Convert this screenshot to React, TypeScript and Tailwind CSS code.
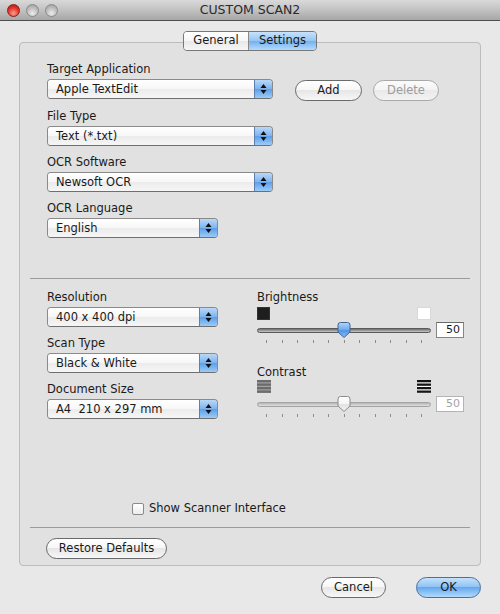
import React from "react";

const Arrows = () => (
  <svg width="7" height="12" viewBox="0 0 7 12">
    <path d="M3.5 1 L6.5 5 L0.5 5 Z" fill="#111" />
    <path d="M3.5 11 L6.5 7 L0.5 7 Z" fill="#111" />
  </svg>
);

const Select = ({ value, w }: { value: string; w: string }) => (
  <div className={`${w} flex h-[20px] shrink-0 overflow-hidden rounded-[4px] border border-[#8a8a8a] border-b-[#6f6f6f]`}>
    <div className="flex-1 pl-[8px] leading-[18px] bg-[linear-gradient(#ffffff,#f7f7f7_50%,#ebebeb_50%,#f6f6f6)] whitespace-pre">
      {value}
    </div>
    <div className="flex w-[18px] items-center justify-center border-l border-[#5b7fae] bg-[linear-gradient(#b9d8f8,#7db3ee_50%,#5b9de8_50%,#9ccbf7)]">
      <Arrows />
    </div>
  </div>
);

const Label = ({ children, className = "" }: { children: React.ReactNode; className?: string }) => (
  <div className={`h-4 leading-4 ${className}`}>{children}</div>
);

const PillButton = ({
  children,
  w,
  disabled = false,
  blue = false,
}: {
  children: React.ReactNode;
  w: string;
  disabled?: boolean;
  blue?: boolean;
}) => (
  <div
    className={`${w} flex h-[21px] items-center justify-center rounded-full border ${
      disabled
        ? "border-[#a8a8a8] text-[#9c9c9c] bg-[linear-gradient(#fbfbfb,#f3f3f3_50%,#e9e9e9_50%,#f3f3f3)]"
        : blue
        ? "border-[#4d6f9c] bg-[linear-gradient(#c5e1fc,#8cc1f4_50%,#66a8ee_50%,#b0dafc)]"
        : "border-[#6a6a6a] bg-[linear-gradient(#ffffff,#f6f6f6_50%,#e6e6e6_50%,#f7f7f7)]"
    }`}
  >
    {children}
  </div>
);

const Thumb = ({ blue }: { blue: boolean }) => (
  <svg width="14" height="16" viewBox="0 0 14 16" className="absolute left-[80px] top-0">
    <defs>
      <linearGradient id="tb" x1="0" y1="0" x2="0" y2="1">
        <stop offset="0" stopColor="#b4d6fa" />
        <stop offset="0.5" stopColor="#6ea9ec" />
        <stop offset="0.5" stopColor="#4f93e4" />
        <stop offset="1" stopColor="#87bdf4" />
      </linearGradient>
      <linearGradient id="tw" x1="0" y1="0" x2="0" y2="1">
        <stop offset="0" stopColor="#ffffff" />
        <stop offset="0.5" stopColor="#f4f4f4" />
        <stop offset="0.5" stopColor="#e2e2e2" />
        <stop offset="1" stopColor="#f2f2f2" />
      </linearGradient>
    </defs>
    <path
      d="M1 3 Q1 0.5 3.5 0.5 H10.5 Q13 0.5 13 3 V10 L7 15.5 L1 10 Z"
      fill={blue ? "url(#tb)" : "url(#tw)"}
      stroke={blue ? "#3f6494" : "#8a8a8a"}
      strokeWidth="1"
    />
  </svg>
);

const Slider = ({ blue }: { blue: boolean }) => (
  <div className="relative h-[16px] w-[174px] shrink-0">
    <div
      className={`absolute left-0 right-0 top-[6px] h-[5px] rounded-full ${
        blue
          ? "border border-[#5a5a5a] bg-[linear-gradient(#6e6e6e,#9a9a9a_50%,#c8c8c8)]"
          : "border border-[#a3a3a3] bg-[linear-gradient(#b5b5b5,#cbcbcb_50%,#dedede)]"
      }`}
    />
    <Thumb blue={blue} />
  </div>
);

const Ticks = ({ className = "" }: { className?: string }) => (
  <div className={`flex w-[174px] justify-between px-[9px] ${className}`}>
    {Array.from({ length: 11 }).map((_, i) => (
      <div key={i} className="h-[3px] w-px bg-[#8c8c8c]" />
    ))}
  </div>
);

const Field = ({ disabled = false }: { disabled?: boolean }) => (
  <div
    className={`h-[16px] w-[28px] border bg-white pr-[3px] text-right text-[11px] leading-[14px] ${
      disabled ? "border-[#b4b4b4] text-[#a4a4a4]" : "border-[#858585] border-t-[#6a6a6a] text-[#1a1a1a]"
    }`}
  >
    50
  </div>
);

const Stripes = ({ dark }: { dark: boolean }) => (
  <svg width="14" height="13" viewBox="0 0 14 13">
    <rect x="0" y="0" width="14" height="13" fill={dark ? "#ffffff" : "#a3a3a3"} />
    {[0, 3.5, 7, 10.5].map((y) => (
      <rect key={y} x="0" y={y} width="14" height="2.3" fill={dark ? "#151515" : "#6b6b6b"} />
    ))}
  </svg>
);

const Light = ({ red }: { red: boolean }) => (
  <div
    className={`h-[13px] w-[13px] rounded-full border ${
      red
        ? "border-[#8c1d18] bg-[radial-gradient(circle_at_50%_75%,#ff9a8f,#e0352c_55%,#a5150f)]"
        : "border-[#8a8a8a] bg-[radial-gradient(circle_at_50%_75%,#ececec,#bdbdbd_55%,#999999)]"
    }`}
  />
);

export default function App() {
  return (
    <div className="flex h-[614px] w-[500px] flex-col overflow-hidden bg-[#e8e8e8] font-['DejaVu_Sans',sans-serif] text-[11.5px] text-[#1a1a1a]">
      {/* Title bar */}
      <div className="flex h-[21px] shrink-0 items-center border-b border-[#4f4f4f] bg-[linear-gradient(#d9d9d9,#c2c2c2_50%,#a6a6a6)]">
        <div className="flex w-[66px] items-center gap-[6px] pl-[7px]">
          <Light red />
          <Light red={false} />
          <Light red={false} />
        </div>
        <div className="flex-1 text-center text-[12.5px] text-[#2a2a2a]">CUSTOM SCAN2</div>
        <div className="w-[66px]" />
      </div>

      <div className="flex flex-col px-[19px]">
        {/* Tabs */}
        <div className="relative z-10 mt-[10px] flex h-[20px] self-center overflow-hidden rounded-[4px] border border-[#777777]">
          <div className="flex w-[65px] items-center justify-center border-r border-[#8a8a8a] bg-[linear-gradient(#ffffff,#f6f6f6_50%,#e8e8e8_50%,#f6f6f6)]">
            General
          </div>
          <div className="flex w-[67px] items-center justify-center bg-[linear-gradient(#c8e2fb,#93c4f4_50%,#72afef_50%,#b4dbfc)]">
            Settings
          </div>
        </div>

        {/* Group box */}
        <div className="-mt-[9px] flex flex-col rounded-[4px] border border-[#bcbcbc] bg-[#e1e1e1]">
          <div className="flex flex-col px-[27px] pt-[18px]">
            <Label>Target Application</Label>
            <div className="mt-[2px] flex h-[20px] items-start">
              <Select value="Apple TextEdit" w="w-[226px]" />
              <div className="ml-[22px] mt-px flex gap-[11px]">
                <PillButton w="w-[67px]">Add</PillButton>
                <PillButton w="w-[66px]" disabled>
                  Delete
                </PillButton>
              </div>
            </div>
            <Label className="mt-[9px]">File Type</Label>
            <div className="mt-[2px]">
              <Select value="Text (*.txt)" w="w-[226px]" />
            </div>
            <Label className="mt-[8px]">OCR Software</Label>
            <div className="mt-[2px]">
              <Select value="Newsoft OCR" w="w-[226px]" />
            </div>
            <Label className="mt-[8px]">OCR Language</Label>
            <div className="mt-[2px]">
              <Select value="English" w="w-[171px]" />
            </div>
          </div>

          <div className="mx-[10px] mt-[40px] h-px bg-[#9c9c9c]" />

          <div className="flex gap-[39px] px-[27px] pt-[10px]">
            <div className="flex w-[171px] flex-col">
              <Label>Resolution</Label>
              <div className="mt-[2px]">
                <Select value="400 x 400 dpi" w="w-[171px]" />
              </div>
              <Label className="mt-[8px]">Scan Type</Label>
              <div className="mt-[2px]">
                <Select value="Black & White" w="w-[171px]" />
              </div>
              <Label className="mt-[8px]">Document Size</Label>
              <div className="mt-[2px]">
                <Select value="A4  210 x 297 mm" w="w-[171px]" />
              </div>
            </div>

            <div className="flex flex-col">
              <Label>Brightness</Label>
              <div className="mt-[2px] flex h-[13px] w-[174px] justify-between">
                <div className="h-[13px] w-[13px] border border-[#333] bg-[#1e1e1e]" />
                <div className="h-[13px] w-[14px] border border-[#d8d8d8] bg-white" />
              </div>
              <div className="mt-[2px] flex items-center gap-[5px]">
                <Slider blue />
                <Field />
              </div>
              <Ticks className="mt-[2px]" />

              <Label className="mt-[21px]">Contrast</Label>
              <div className="flex h-[13px] w-[174px] justify-between">
                <Stripes dark={false} />
                <Stripes dark />
              </div>
              <div className="mt-[3px] flex items-center gap-[5px]">
                <Slider blue={false} />
                <Field disabled />
              </div>
              <Ticks className="mt-[2px]" />
            </div>
          </div>

          <div className="mt-[82px] flex h-[16px] items-center pl-[112px]">
            <div className="h-[12px] w-[12px] rounded-[2px] border border-[#8a8a8a] bg-[linear-gradient(#ffffff,#ececec)]" />
            <span className="ml-[5px]">Show Scanner Interface</span>
          </div>

          <div className="mx-[10px] mt-[10px] h-px bg-[#9c9c9c]" />

          <div className="ml-[26px] mt-[10px] pb-[6px]">
            <PillButton w="w-[121px]">Restore Defaults</PillButton>
          </div>
        </div>

        <div className="mt-[11px] flex justify-end gap-[30px]">
          <PillButton w="w-[65px]">Cancel</PillButton>
          <PillButton w="w-[65px]" blue>
            OK
          </PillButton>
        </div>
      </div>
    </div>
  );
}
